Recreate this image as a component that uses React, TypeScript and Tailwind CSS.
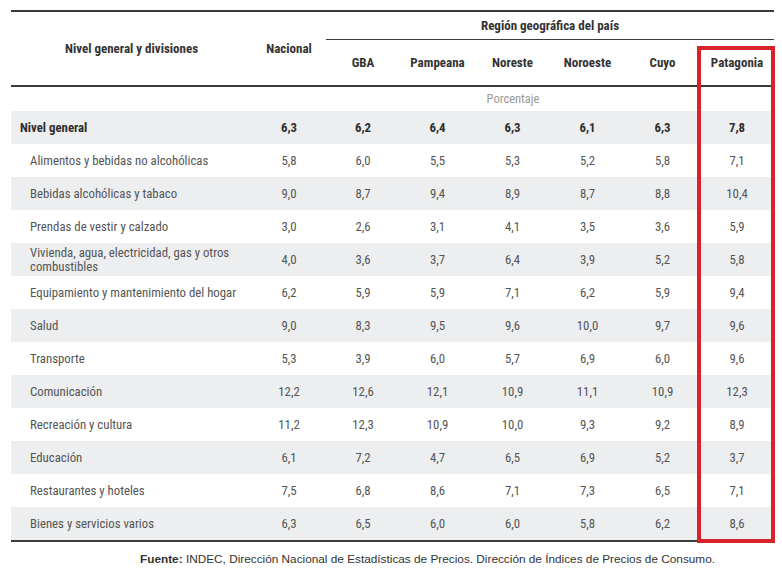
const regions = ["GBA", "Pampeana", "Noreste", "Noroeste", "Cuyo", "Patagonia"];

const rows: { label: string; values: string[]; bold?: boolean; twoLine?: boolean }[] = [
  { label: "Nivel general", values: ["6,3", "6,2", "6,4", "6,3", "6,1", "6,3", "7,8"], bold: true },
  { label: "Alimentos y bebidas no alcohólicas", values: ["5,8", "6,0", "5,5", "5,3", "5,2", "5,8", "7,1"] },
  { label: "Bebidas alcohólicas y tabaco", values: ["9,0", "8,7", "9,4", "8,9", "8,7", "8,8", "10,4"] },
  { label: "Prendas de vestir y calzado", values: ["3,0", "2,6", "3,1", "4,1", "3,5", "3,6", "5,9"] },
  { label: "Vivienda, agua, electricidad, gas y otros combustibles", values: ["4,0", "3,6", "3,7", "6,4", "3,9", "5,2", "5,8"], twoLine: true },
  { label: "Equipamiento y mantenimiento del hogar", values: ["6,2", "5,9", "5,9", "7,1", "6,2", "5,9", "9,4"] },
  { label: "Salud", values: ["9,0", "8,3", "9,5", "9,6", "10,0", "9,7", "9,6"] },
  { label: "Transporte", values: ["5,3", "3,9", "6,0", "5,7", "6,9", "6,0", "9,6"] },
  { label: "Comunicación", values: ["12,2", "12,6", "12,1", "10,9", "11,1", "10,9", "12,3"] },
  { label: "Recreación y cultura", values: ["11,2", "12,3", "10,9", "10,0", "9,3", "9,2", "8,9"] },
  { label: "Educación", values: ["6,1", "7,2", "4,7", "6,5", "6,9", "5,2", "3,7"] },
  { label: "Restaurantes y hoteles", values: ["7,5", "6,8", "8,6", "7,1", "7,3", "6,5", "7,1"] },
  { label: "Bienes y servicios varios", values: ["6,3", "6,5", "6,0", "6,0", "5,8", "6,2", "8,6"] },
];

const cols = "grid grid-cols-[241px_74px_74px_75px_75px_75px_75px_74px]";

export default function App() {
  return (
    <div className="relative h-[574px] w-[782px] overflow-hidden bg-white pt-[10px] pl-[11px] font-['Liberation_Sans_Narrow','Roboto_Condensed','Liberation_Sans',sans-serif]">
      {/* Header */}
      <div className={`${cols} w-[763px] border-y-2 border-[#3a3a3a] text-[13px] font-bold text-[#333]`}>
        <div className="row-span-2 flex items-center justify-center">Nivel general y divisiones</div>
        <div className="row-span-2 flex items-center justify-center">Nacional</div>
        <div className="col-span-6 flex h-[28px] items-center justify-center border-b border-[#3a3a3a]">
          Región geográfica del país
        </div>
        {regions.map(r => (
          <div key={r} className="flex h-[45px] items-center justify-center">{r}</div>
        ))}
      </div>

      {/* Unit row */}
      <div className={`${cols} h-[24px] w-[763px] text-[12.5px] text-[#9a9a9a]`}>
        <div />
        <div className="col-span-7 flex items-center justify-center">Porcentaje</div>
      </div>

      {/* Body */}
      <div className="w-[763px] border-b-2 border-[#3a3a3a]">
        {rows.map((row, i) => (
          <div key={row.label}
            className={`${cols} h-[33px] items-center text-[12.8px] ${i % 2 === 0 ? "bg-[#eceef0]" : "bg-white"} ${row.bold ? "font-bold text-[#2e2e2e]" : "text-[#555]"}`}>
            <div className={`${row.bold ? "pl-[9px]" : "pl-[19px]"} ${row.twoLine ? "pr-[8px] leading-[14px]" : ""}`}>
              {row.label}
            </div>
            {row.values.map((v, j) => (
              <div key={j} className="text-center">{v}</div>
            ))}
          </div>
        ))}
      </div>

      {/* Source */}
      <p className="mt-[9px] pl-[129px] font-['Liberation_Sans',Arial,sans-serif] text-[11.8px] text-[#333]">
        <span className="font-bold">Fuente:</span> INDEC, Dirección Nacional de Estadísticas de Precios. Dirección de Índices de Precios de Consumo.
      </p>

      {/* Highlight */}
      <div className="absolute left-[697px] top-[46px] h-[497px] w-[78px] border-4 border-[#d9232b]" />
    </div>
  );
}
